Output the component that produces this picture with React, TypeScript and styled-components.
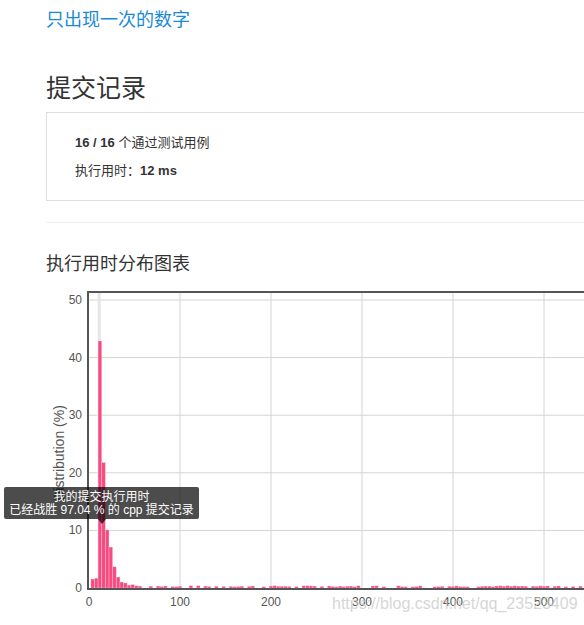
import styled, { createGlobalStyle } from "styled-components";

const GlobalStyle = createGlobalStyle`
  html, body {
    margin: 0;
    padding: 0;
    background: #fff;
    overflow: hidden;
  }
  body {
    font-family: "Liberation Sans", "Noto Sans CJK SC", sans-serif;
    color: #333;
  }
`;

const Page = styled.div`
  width: 760px;
  padding: 8px 0 0 46px;
`;

const ProblemLink = styled.a`
  display: block;
  font-size: 18px;
  line-height: 24px;
  color: #1a8ad8;
  text-decoration: none;
`;

const PageTitle = styled.h2`
  margin: 38px 0 0;
  font-size: 25px;
  line-height: 36px;
  font-weight: normal;
  color: #333;
`;

const ResultBox = styled.div`
  margin-top: 6px;
  border: 1px solid #ddd;
  padding: 20px 28px 19px;
  display: flex;
  flex-direction: column;
  gap: 8px;
`;

const ResultLine = styled.div`
  font-size: 13px;
  line-height: 20px;
  color: #333;
  b {
    font-weight: bold;
  }
`;

const Divider = styled.hr`
  margin: 21px 0 0;
  border: 0;
  border-top: 1px solid #eee;
`;

const SectionTitle = styled.h3`
  margin: 29px 0 0;
  font-size: 18px;
  line-height: 24px;
  font-weight: normal;
  color: #333;
`;

const ChartWrap = styled.div`
  position: relative;
  margin-top: 4px;
  height: 345px;
`;

const Tooltip = styled.div`
  position: absolute;
  left: -42px;
  top: 207px;
  width: 195px;
  height: 32px;
  box-sizing: border-box;
  padding-top: 4px;
  background: rgba(0, 0, 0, 0.7);
  border-radius: 2px;
  color: #fff;
  font-size: 12px;
  line-height: 13px;
  text-align: center;
  &::after {
    content: "";
    position: absolute;
    left: 50%;
    bottom: -5px;
    margin-left: -4px;
    border-left: 4px solid transparent;
    border-right: 4px solid transparent;
    border-top: 5px solid rgba(0, 0, 0, 0.7);
  }
`;

const Watermark = styled.div`
  position: absolute;
  left: 286px;
  top: 315px;
  font-size: 16px;
  color: rgba(200, 200, 200, 0.75);
  white-space: nowrap;
  pointer-events: none;
`;

// value -> svg coords
const X = (ms: number) => 43 + ms * 0.91;
const Y = (v: number) => 308 - v * 5.76;

const head = [1.56, 1.7, 42.9, 21.8, 10.1, 7.1, 3.7, 1.9, 1.04, 0.87, 0.5, 0.6, 0.4];

const buildBars = () => {
  const bars: number[] = [...head];
  let seed = 7;
  const rnd = () => {
    seed = (seed * 9301 + 49297) % 233280;
    return seed / 233280;
  };
  for (let i = head.length; i < 150; i++) {
    const r = rnd();
    bars.push(r < 0.28 ? 0 : 0.22 + rnd() * 0.2);
  }
  return bars;
};

const bars = buildBars();

const Chart = () => {
  const xTicks = [0, 100, 200, 300, 400, 500, 600];
  const yTicks = [0, 10, 20, 30, 40, 50];
  return (
    <svg width={720} height={345} style={{ display: "block" }}>
      {yTicks.slice(1).map((v) => (
        <line key={v} x1={42} x2={720} y1={Y(v)} y2={Y(v)} stroke="#d4d4d4" strokeWidth={1} />
      ))}
      {xTicks.slice(1).map((v) => (
        <line key={v} x1={X(v)} x2={X(v)} y1={12} y2={309} stroke="#d4d4d4" strokeWidth={1} />
      ))}
      <rect x={51.7} y={13} width={3} height={295} fill="#e6e6e6" />
      {bars.map((h, i) =>
        h > 0 ? (
          <rect
            key={i}
            x={X(2 + i * 4)}
            y={Y(h)}
            width={3.64}
            height={h * 5.76}
            fill="#f74a80"
            stroke="#fff"
            strokeOpacity={0.35}
            strokeWidth={0.8}
          />
        ) : null
      )}
      <path d="M720 12 H42 V309 H720" fill="none" stroke="#555" strokeWidth={2} />
      {yTicks.map((v) => (
        <text key={v} x={36} y={Y(v) + 4} textAnchor="end" fontSize={12} fill="#555">
          {v}
        </text>
      ))}
      {xTicks.map((v) => (
        <text key={v} x={X(v)} y={326} textAnchor="middle" fontSize={12} fill="#555">
          {v}
        </text>
      ))}
      <text
        transform="translate(18 173) rotate(-90)"
        textAnchor="middle"
        fontSize={14}
        fill="#555"
      >
        Distribution (%)
      </text>
    </svg>
  );
};

const App = () => {
  return (
    <>
      <GlobalStyle />
      <Page>
        <ProblemLink href="#">只出现一次的数字</ProblemLink>
        <PageTitle>提交记录</PageTitle>
        <ResultBox>
          <ResultLine>
            <b>16 / 16</b> 个通过测试用例
          </ResultLine>
          <ResultLine>
            执行用时：<b>12 ms</b>
          </ResultLine>
        </ResultBox>
        <Divider />
        <SectionTitle>执行用时分布图表</SectionTitle>
        <ChartWrap>
          <Chart />
          <Tooltip>
            我的提交执行用时
            <br />
            已经战胜 97.04 % 的 cpp 提交记录
          </Tooltip>
          <Watermark>https://blog.csdn.net/qq_23523409</Watermark>
        </ChartWrap>
      </Page>
    </>
  );
};

export default App;
